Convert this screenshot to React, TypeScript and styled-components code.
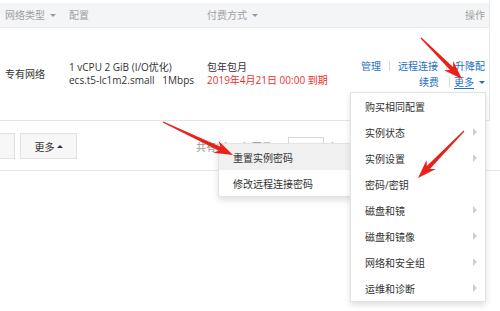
import React from "react";
import styled, { createGlobalStyle } from "styled-components";

const Global = createGlobalStyle`
  html, body { margin: 0; padding: 0; background: #fff; }
  * { box-sizing: border-box; }
`;

const FONT = `"Open Sans", "Noto Sans CJK SC", sans-serif`;

const Page = styled.div`
  position: relative;
  width: 500px;
  height: 311px;
  overflow: hidden;
  background: #fff;
  font-family: ${FONT};
  font-size: 10px;
  color: #333;
`;

const Table = styled.div`
  width: 490px;
  padding-top: 3px;
  border-right: 1px solid #e8e8e8;
`;

const HeaderRow = styled.div`
  display: flex;
  align-items: center;
  height: 25px;
  background: #f4f5f7;
  border-bottom: 1px solid #ebebeb;
  color: #a0a0a0;
`;

const BodyRow = styled.div`
  display: flex;
  align-items: center;
  height: 93px;
  border-bottom: 1px solid #e6e6e6;
`;

const Cell = styled.div<{ $w?: number; $right?: boolean; $pl?: number }>`
  ${(p) => (p.$w ? `width: ${p.$w}px; flex: none;` : "flex: 1;")}
  padding-left: ${(p) => p.$pl ?? 0}px;
  padding-right: ${(p) => (p.$right ? 4 : 0)}px;
  display: flex;
  flex-direction: column;
  align-items: ${(p) => (p.$right ? "flex-end" : "flex-start")};
  line-height: 13px;
  white-space: nowrap;
`;

const Caret = styled.span<{ $color?: string }>`
  display: inline-block;
  margin-left: 5px;
  width: 0;
  height: 0;
  border-left: 3px solid transparent;
  border-right: 3px solid transparent;
  border-top: 3px solid ${(p) => p.$color ?? "#999"};
  vertical-align: middle;
`;

const Red = styled.span`
  color: #e8312c;
`;

const Spec = styled.span`
  word-spacing: 0px;
`;

const LinkLine = styled.div`
  display: flex;
  align-items: center;
  height: 16px;
  color: #1f6fc5;
`;

const Sep = styled.span<{ $l?: number; $r?: number }>`
  width: 1px;
  height: 10px;
  background: #d9d9d9;
  margin: 0 ${(p) => p.$r ?? 8}px 0 ${(p) => p.$l ?? 8}px;
`;

const More = styled.span`
  text-decoration: underline;
  text-underline-offset: 2px;
`;

const Toolbar = styled.div`
  display: flex;
  align-items: center;
  height: 50px;
  padding-top: 1px;
  border-bottom: 1px solid #e8e8e8;
`;

const Btn = styled.div<{ $w: number; $ml?: number }>`
  width: ${(p) => p.$w}px;
  height: 26px;
  margin-left: ${(p) => p.$ml ?? 0}px;
  background: #f7f7f7;
  border: 1px solid #e1e1e1;
  display: flex;
  align-items: center;
  justify-content: center;
  color: #333;
  overflow: hidden;
`;

const UpCaret = styled.span`
  display: inline-block;
  margin-left: 2px;
  width: 0;
  height: 0;
  border-left: 3px solid transparent;
  border-right: 3px solid transparent;
  border-bottom: 3px solid #333;
`;

const Pager = styled.div`
  display: flex;
  align-items: center;
  margin-left: 119px;
  color: #999;
  white-space: nowrap;
`;

const SizeBox = styled.div`
  width: 36px;
  height: 19px;
  border: 1px solid #d9d9d9;
  margin: 0 5px 0 6px;
`;

const Menu = styled.div<{ $x: number; $y: number; $w: number }>`
  position: absolute;
  left: ${(p) => p.$x}px;
  top: ${(p) => p.$y}px;
  width: ${(p) => p.$w}px;
  background: #fff;
  border: 1px solid #e3e3e3;
  box-shadow: 0 3px 6px rgba(0, 0, 0, 0.13);
  padding: 0;
`;

const Item = styled.div<{ $active?: boolean }>`
  display: flex;
  align-items: center;
  justify-content: space-between;
  height: 26px;
  padding: 0 8px 0 14px;
  background: ${(p) => (p.$active ? "#f0f0f0" : "transparent")};
  color: #333;
  white-space: nowrap;
`;

const Chevron = styled.span`
  width: 0;
  height: 0;
  border-top: 4px solid transparent;
  border-bottom: 4px solid transparent;
  border-left: 4px solid #cfcfcf;
`;

const Overlay = styled.svg`
  position: absolute;
  left: 0;
  top: 0;
  pointer-events: none;
`;

function arrowPoints(x1: number, y1: number, x2: number, y2: number) {
  const dx = x2 - x1;
  const dy = y2 - y1;
  const len = Math.hypot(dx, dy);
  const ux = dx / len;
  const uy = dy / len;
  const nx = -uy;
  const ny = ux;
  const L = 19;
  const W = 6.5;
  const neck = L * 0.78;
  const p = (bx: number, by: number, along: number, side: number) =>
    `${(bx + ux * along + nx * side).toFixed(1)},${(by + uy * along + ny * side).toFixed(1)}`;
  return [
    p(x1, y1, 0, 0.6),
    p(x2, y2, -neck, 2.2),
    p(x2, y2, -L, W),
    p(x2, y2, 0, 0),
    p(x2, y2, -L, -W),
    p(x2, y2, -neck, -2.2),
    p(x1, y1, 0, -0.6),
  ].join(" ");
}

const mainItems: { label: string; sub?: boolean }[] = [
  { label: "购买相同配置" },
  { label: "实例状态", sub: true },
  { label: "实例设置", sub: true },
  { label: "密码/密钥" },
  { label: "磁盘和镜", sub: true },
  { label: "磁盘和镜像", sub: true },
  { label: "网络和安全组", sub: true },
  { label: "运维和诊断", sub: true },
];

export default function App() {
  return (
    <Page>
      <Global />
      <Table>
        <HeaderRow>
          <Cell $w={69} $pl={5}>
            <span>
              网络类型<Caret />
            </span>
          </Cell>
          <Cell $w={138}>配置</Cell>
          <Cell>
            <span>
              付费方式<Caret />
            </span>
          </Cell>
          <Cell $right>操作</Cell>
        </HeaderRow>
        <BodyRow>
          <Cell $w={69} $pl={5}>
            专有网络
          </Cell>
          <Cell $w={138}>
            <span>1 vCPU 2 GiB (I/O优化)</span>
            <Spec>ecs.t5-lc1m2.small&nbsp;&nbsp;&nbsp;1Mbps</Spec>
          </Cell>
          <Cell>
            <span>包年包月</span>
            <Red>2019年4月21日 00:00 到期</Red>
          </Cell>
          <Cell $right>
            <LinkLine>
              管理<Sep />远程连接<Sep />升降配
            </LinkLine>
            <LinkLine>
              续费<Sep $l={10} $r={4} />
              <More>更多</More>
              <Caret $color="#1f6fc5" />
            </LinkLine>
          </Cell>
        </BodyRow>
      </Table>
      <Toolbar>
        <Btn $w={45} $ml={-30}>
          &nbsp;
        </Btn>
        <Btn $w={57} $ml={5}>
          更多
          <UpCaret />
        </Btn>
        <Pager>
          共有1条，每页显示
          <SizeBox />
          条
        </Pager>
      </Toolbar>

      <Menu $x={218} $y={143} $w={134}>
        <Item $active>重置实例密码</Item>
        <Item>修改远程连接密码</Item>
      </Menu>

      <Menu $x={350} $y={92} $w={136}>
        {mainItems.map((it) => (
          <Item key={it.label}>
            <span>{it.label}</span>
            {it.sub && <Chevron />}
          </Item>
        ))}
      </Menu>

      <Overlay width={500} height={311} viewBox="0 0 500 311">
        <polygon points={arrowPoints(421, 38, 462, 79)} fill="#e8221b" />
        <polygon points={arrowPoints(163, 122, 233, 155)} fill="#e8221b" />
        <polygon points={arrowPoints(464, 131, 418, 178)} fill="#e8221b" />
      </Overlay>
    </Page>
  );
}
